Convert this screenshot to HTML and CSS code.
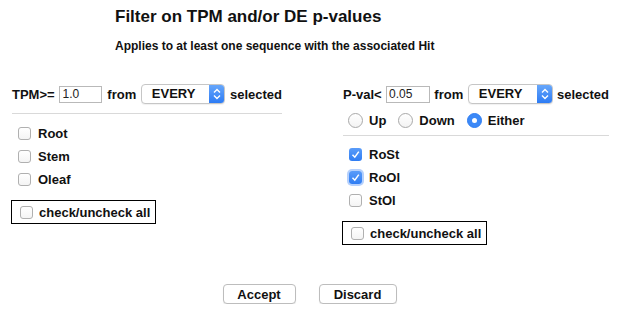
FILE: index.html
```html
<!DOCTYPE html>
<html lang="en">
<head>
    <meta charset="UTF-8">
    <title>Filter on TPM and/or DE p-values</title>
    <link rel="stylesheet" href="styles.css">
</head>
<body>
    <header class="head">
        <h1>Filter on TPM and/or DE p-values</h1>
        <p class="sub">Applies to at least one sequence with the associated Hit</p>
    </header>

    <main class="panels">
        <section class="panel tpm">
            <div class="crit">
                <span>TPM&gt;=</span>
                <input class="num" type="text" value="1.0">
                <span>from</span>
                <span class="sel">
                    <span class="sel-txt">EVERY</span>
                    <span class="sel-btn">
                        <svg width="16" height="20" viewBox="0 0 16 20"><path d="M5 8.5 L8 5.5 L11 8.5 M5 11.5 L8 14.5 L11 11.5" fill="none" stroke="#fff" stroke-width="1.4"/></svg>
                    </span>
                </span>
                <span>selected</span>
            </div>
            <hr class="rule">
            <ul class="checks">
                <li><span class="box"></span>Root</li>
                <li><span class="box"></span>Stem</li>
                <li><span class="box"></span>Oleaf</li>
            </ul>
            <div class="all"><span class="box"></span>check/uncheck all</div>
        </section>

        <section class="panel pval">
            <div class="crit">
                <span>P-val&lt;</span>
                <input class="num" type="text" value="0.05">
                <span>from</span>
                <span class="sel">
                    <span class="sel-txt">EVERY</span>
                    <span class="sel-btn">
                        <svg width="16" height="20" viewBox="0 0 16 20"><path d="M5 8.5 L8 5.5 L11 8.5 M5 11.5 L8 14.5 L11 11.5" fill="none" stroke="#fff" stroke-width="1.4"/></svg>
                    </span>
                </span>
                <span>selected</span>
            </div>
            <div class="radios">
                <span class="opt"><span class="radio"></span>Up</span>
                <span class="opt"><span class="radio"></span>Down</span>
                <span class="opt"><span class="radio on"></span>Either</span>
            </div>
            <hr class="rule">
            <ul class="checks">
                <li><span class="box on"><svg width="13" height="13" viewBox="0 0 13 13"><path d="M3.5 6.8 L5.8 9.2 L9.8 3.6" fill="none" stroke="#fff" stroke-width="1.5"/></svg></span>RoSt</li>
                <li><span class="box on focus"><svg width="13" height="13" viewBox="0 0 13 13"><path d="M3.5 6.8 L5.8 9.2 L9.8 3.6" fill="none" stroke="#fff" stroke-width="1.5"/></svg></span>RoOl</li>
                <li><span class="box"></span>StOl</li>
            </ul>
            <div class="all"><span class="box"></span>check/uncheck all</div>
        </section>
    </main>

    <footer class="actions">
        <button class="btn accept">Accept</button>
        <button class="btn discard">Discard</button>
    </footer>
</body>
</html>
```

FILE: styles.css
```css
body {
    margin: 0;
    padding: 7px 9px 0 12px;
    background: #fff;
    color: #111;
    font-family: "Liberation Sans", Arial, sans-serif;
    font-weight: bold;
    font-size: 13px;
}

.head {
    padding-left: 103px;
}

h1 {
    margin: 0;
    font-size: 17px;
    line-height: 20px;
}

.sub {
    margin: 12px 0 0;
    font-size: 12px;
    line-height: 15px;
}

.panels {
    display: flex;
    justify-content: space-between;
    margin-top: 30px;
}

.panel.tpm {
    width: 270px;
}

.panel.pval {
    width: 266px;
}

.crit {
    display: flex;
    align-items: center;
    justify-content: space-between;
    height: 20px;
}

.num {
    width: 43px;
    height: 17px;
    box-sizing: border-box;
    border: 1px solid #b9b9b9;
    padding: 0 2px;
    margin: 0;
    font-family: "Liberation Sans", Arial, sans-serif;
    font-size: 12px;
    color: #222;
    outline: none;
}

.pval .num {
    width: 44px;
}

.sel {
    display: flex;
    width: 84px;
    height: 20px;
    box-sizing: border-box;
    border: 1px solid #c6c6c6;
    border-radius: 4px;
    background: #fff;
    box-shadow: 0 1px 1px rgba(0, 0, 0, 0.06);
    overflow: hidden;
}

.pval .sel {
    width: 85px;
}

.sel-txt {
    flex: 1;
    text-align: center;
    line-height: 18px;
    padding-right: 4px;
}

.sel-btn {
    width: 16px;
    margin: -1px -1px -1px 0;
    background: linear-gradient(#6aa9fb, #2a79f4);
    display: flex;
    align-items: center;
    justify-content: center;
}

.rule {
    border: 0;
    border-top: 1px solid #d9d9d9;
    margin: 9px 0 0;
}

.pval .rule {
    margin-top: 5px;
}

.radios {
    display: flex;
    align-items: center;
    height: 20px;
    margin-top: 6px;
    padding-left: 5px;
    gap: 12px;
}

.opt {
    display: flex;
    align-items: center;
    gap: 6px;
}

.radio {
    width: 15px;
    height: 15px;
    box-sizing: border-box;
    border: 1px solid #a9a9a9;
    border-radius: 50%;
    background: linear-gradient(#fff, #f3f3f3);
}

.radio.on {
    border-color: #2f7ef2;
    background: #3c89f7;
    position: relative;
}

.radio.on::after {
    content: "";
    position: absolute;
    left: 4px;
    top: 4px;
    width: 5px;
    height: 5px;
    border-radius: 50%;
    background: #fff;
}

.checks {
    list-style: none;
    margin: 8px 0 0;
    padding: 0 0 0 6px;
}

.pval .checks {
    margin-top: 7px;
}

.checks li {
    display: flex;
    align-items: center;
    height: 23px;
    gap: 7px;
}

.box {
    display: inline-flex;
    width: 13px;
    height: 13px;
    box-sizing: border-box;
    border: 1px solid #b0b0b0;
    border-radius: 3px;
    background: linear-gradient(#fff, #f4f4f4);
    flex-shrink: 0;
}

.box.on {
    border: 0;
    background: linear-gradient(#5a9cf9, #2f7df3);
}

.box.focus {
    box-shadow: 0 0 0 2px rgba(120, 170, 250, 0.55);
}

.all {
    display: inline-flex;
    align-items: center;
    gap: 6px;
    height: 24px;
    box-sizing: border-box;
    margin: 9px 0 0 -1px;
    padding: 0 5px 0 8px;
    border: 1px solid #000;
}

.actions {
    display: flex;
    justify-content: center;
    gap: 23px;
    margin-top: 39px;
    padding-right: 2px;
}

.btn {
    height: 20px;
    padding: 0;
    border: 1px solid #bdbdbd;
    border-radius: 4px;
    background: #fff;
    box-shadow: 0 1px 1px rgba(0, 0, 0, 0.08);
    font-family: "Liberation Sans", Arial, sans-serif;
    font-weight: bold;
    font-size: 13px;
    color: #111;
}

.accept {
    width: 73px;
}

.discard {
    width: 78px;
}
```
